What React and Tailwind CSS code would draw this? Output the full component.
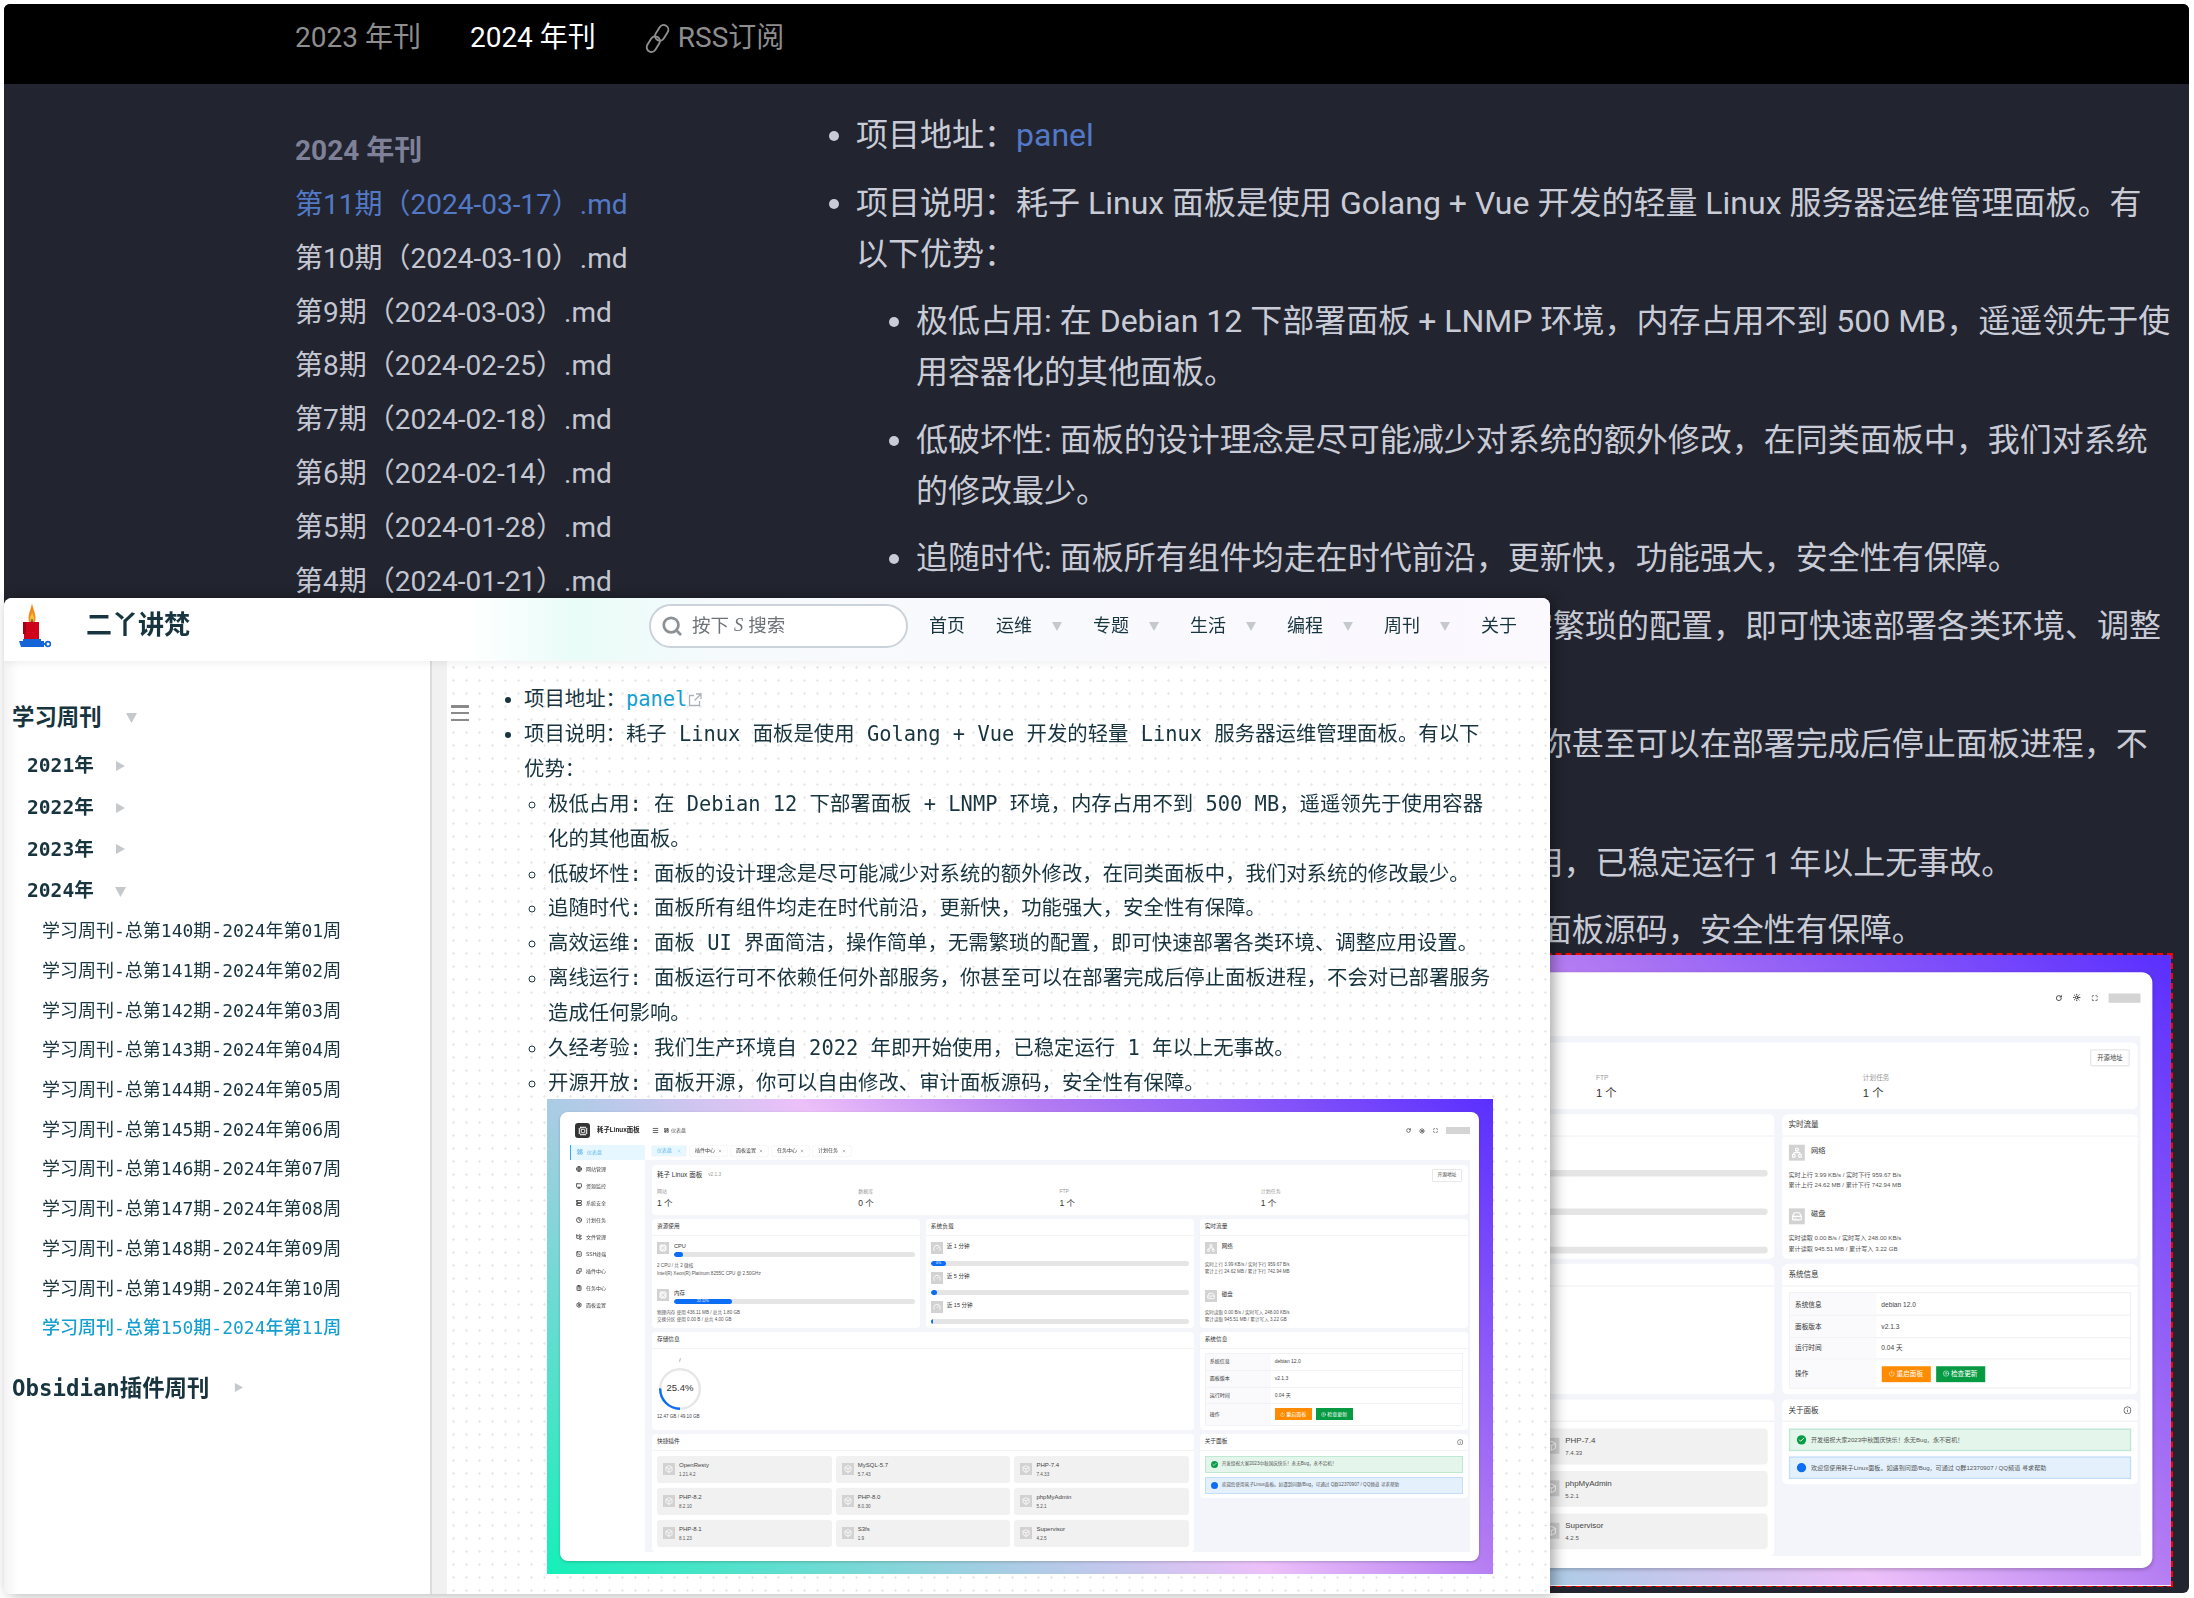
import React from "react";
import {
  Search, LayoutDashboard, Globe, Monitor, Server, Clock, FolderTree, SquareTerminal, Puzzle,
  ClipboardList, Settings, Menu, X, RotateCw, Sun, Maximize, Cpu, Gauge, Network, HardDrive, Box, Info, Power, CircleArrowUp, Check,
} from "lucide-react";

const SANS = "font-['Roboto','Noto_Sans_CJK_SC',sans-serif]";
const MONO = "font-['DejaVu_Sans_Mono','Noto_Sans_CJK_SC',monospace]";

function Tri({ dir = "down", className = "" }) {
  return (
    <svg viewBox="0 0 10 10" className={className}>
      {dir === "down" ? <polygon points="0,1 10,1 5,10" fill="#c6c9cc" /> : <polygon points="1,0 10,5 1,10" fill="#c6c9cc" />}
    </svg>
  );
}

function Logo() {
  return (
    <svg viewBox="0 0 34 46" className="w-[34px] h-[46px] shrink-0">
      <path d="M15 0 C16 6 18.5 10 18.5 15 C18.5 20 16 21 15 21 C13.5 21 11.5 19 11.5 15 C11.5 10 14 6 15 0Z" fill="#f28a1c" />
      <path d="M15 9 C16 12 17 13 17 16 C17 19 13 19 13 16 C13 13 15 12 15 9Z" fill="#f9c23c" />
      <rect x="7" y="19" width="15" height="20" fill="#d0021b" />
      <rect x="6" y="19" width="3" height="12" fill="#a80014" />
      <rect x="14.5" y="16" width="1" height="4" fill="#333" />
      <polygon points="2,38 27,38 27,44 4,44" fill="#1565d8" />
      <rect x="6" y="36" width="18" height="3" fill="#1565d8" />
      <circle cx="31" cy="41" r="2.4" fill="none" stroke="#1565d8" strokeWidth="1.6" />
      <rect x="26" y="40" width="3.5" height="2" fill="#1565d8" />
    </svg>
  );
}

function ChainIcon() {
  return (
    <svg viewBox="0 0 28 28" className="w-[31px] h-[31px] shrink-0" fill="none" stroke="#8e8e8e" strokeWidth="1.7">
      <rect x="13.5" y="1.5" width="8.5" height="15" rx="4.2" transform="rotate(32 18 9)" />
      <rect x="6" y="11.5" width="8.5" height="15" rx="4.2" transform="rotate(32 10 19)" />
    </svg>
  );
}

function Card({ title, right, className = "", children }) {
  return (
    <div className={`bg-white rounded-[4px] ${className}`}>
      <div className="h-[17px] border-b border-[#f4f4f6] px-[5px] flex items-center justify-between text-[5.7px] text-[#333]">
        <span>{title}</span>
        {right}
      </div>
      {children}
    </div>
  );
}

function IconBox({ Icon, className = "" }) {
  return (
    <div className={`w-[12px] h-[12px] bg-[#d2d2d2] flex items-center justify-center shrink-0 ${className}`}>
      <Icon size={8} color="#fff" strokeWidth={2.5} />
    </div>
  );
}

function Bar({ pct, label }) {
  return (
    <div className="h-[5px] rounded-full bg-[#e5e5e5] overflow-hidden">
      <div className="h-full rounded-full bg-[#0d6ef5] text-white text-[3.5px] leading-[5px] text-center whitespace-nowrap" style={{ width: pct }}>
        {label}
      </div>
    </div>
  );
}

const menu = [
  [LayoutDashboard, "仪表盘"], [Globe, "网站管理"], [Monitor, "资源监控"], [Server, "系统安全"], [Clock, "计划任务"],
  [FolderTree, "文件管理"], [SquareTerminal, "SSH终端"], [Puzzle, "插件中心"], [ClipboardList, "任务中心"], [Settings, "面板设置"],
];
const tabs = [["仪表盘", 34], ["插件中心", 37], ["面板设置", 37], ["任务中心", 37], ["计划任务", 38]];
const stats = [["网站", "1 个"], ["数据库", "0 个"], ["FTP", "1 个"], ["计划任务", "1 个"]];
const plugins = [
  ["OpenResty", "1.21.4.2"], ["MySQL-5.7", "5.7.43"], ["PHP-7.4", "7.4.33"],
  ["PHP-8.2", "8.2.10"], ["PHP-8.0", "8.0.30"], ["phpMyAdmin", "5.2.1"],
  ["PHP-8.1", "8.1.23"], ["S3fs", "1.9"], ["Supervisor", "4.2.5"],
];

function PanelShot() {
  return (
    <div className="w-[946px] h-[475px] pl-[13px] pr-[14px] py-[13px] bg-[linear-gradient(45deg,#14f0b8_0%,#a9cce4_33%,#ecc0f9_51%,#b57df2_67%,#5a2fff_100%)] font-['Liberation_Sans','Noto_Sans_CJK_SC',sans-serif]">
      <div className="w-full h-full rounded-[8px] bg-white flex pr-[9px] pb-[9px] shadow-[0_1px_3px_rgba(0,0,0,0.2)]">
        <div className="w-full h-full flex blur-[0.35px]">
        {/* side menu */}
        <div className="w-[85px] shrink-0 flex flex-col">
          <div className="h-[32px] flex items-center pl-[15px] gap-[7px] pt-[6px]">
            <div className="w-[15px] h-[15px] rounded-[3px] bg-[#333] flex items-center justify-center">
              <Cpu size={10} color="#fff" />
            </div>
            <span className="text-[6.4px] font-bold text-[#222] whitespace-nowrap">耗子Linux面板</span>
          </div>
          {menu.map(([Icon, t], i) => (
            <div key={t} className="h-[17px] flex items-center">
              <div className={`ml-[10px] w-[75px] h-[15px] flex items-center pl-[6px] gap-[4px] text-[5px] whitespace-nowrap ${i === 0 ? "bg-[#e6f7ff] border-l border-[#2aa7ff] text-[#67b7ee]" : "text-[#444]"}`}>
                <Icon size={6} strokeWidth={3} color={i === 0 ? "#67b7ee" : "#333"} />
                <span>{t}</span>
              </div>
            </div>
          ))}
        </div>
        {/* right */}
        <div className="flex-1 min-w-0 flex flex-col">
          <div className="h-[48px] shrink-0 pt-[12px] pl-[7px]">
            <div className="h-[14px] flex items-center">
              <Menu size={7} color="#333" strokeWidth={2.5} />
              <LayoutDashboard size={5} className="ml-[5px]" color="#333" strokeWidth={3} />
              <span className="ml-[2px] text-[5px] text-[#555]">仪表盘</span>
              <div className="ml-auto flex items-center">
                <RotateCw size={5} color="#333" strokeWidth={3} />
                <Sun size={6} className="ml-[8px]" color="#333" strokeWidth={3} />
                <Maximize size={5} className="ml-[8px]" color="#333" strokeWidth={2.5} />
                <div className="ml-[8px] w-[24px] h-[7px] bg-[#d4d4d4]" />
              </div>
            </div>
            <div className="mt-[8px] flex gap-[4px]">
              {tabs.map(([t, w], i) => (
                <div key={t} style={{ width: w }} className={`h-[10px] rounded-[1px] flex items-center justify-between px-[5px] text-[5px] whitespace-nowrap shadow-[0_0_1px_rgba(0,0,0,0.3)] ${i === 0 ? "bg-[#e6f7ff] text-[#67b7ee]" : "bg-white text-[#444]"}`}>
                  <span>{t}</span>
                  <X size={4} strokeWidth={2} />
                </div>
              ))}
            </div>
          </div>
          <div className="flex-1 min-h-0 bg-[#f3f5fb] pl-[7px] pr-[2px] pt-[5px] grid grid-cols-3 gap-x-[5.5px] gap-y-[4px] grid-rows-[50px_109px_98px_1fr]">
            {/* overview */}
            <div className="col-span-3 bg-white rounded-[4px] pl-[5px] pt-[6px] flex flex-col">
              <div className="h-[10px] flex items-center text-[6.5px] text-[#333]">
                <span>耗子 Linux 面板</span>
                <span className="ml-[6px] text-[4.8px] text-[#999]">v2.1.3</span>
                <div className="ml-auto mr-[6px] w-[30px] h-[13px] border border-[#e8e8e8] rounded-[1px] flex items-center justify-center text-[4.8px] text-[#444]">开源地址</div>
              </div>
              <div className="grid grid-cols-4 mt-[6px] pr-[6px]">
                {stats.map(([k, v]) => (
                  <div key={k}>
                    <div className="text-[5px] leading-[8px] text-[#999]">{k}</div>
                    <div className="mt-[2px] text-[8.5px] leading-[12px] text-[#333]">{v}</div>
                  </div>
                ))}
              </div>
            </div>
            {/* resources */}
            <Card title="资源使用">
              <div className="px-[5px] pt-[6px] text-[4.6px] leading-[7.5px] text-[#555]">
                <div className="flex">
                  <IconBox Icon={Cpu} />
                  <div className="flex-1 ml-[5px]">
                    <div className="h-[8px] text-[5.5px] leading-[8px] text-[#333]">CPU</div>
                    <div className="mt-[2px]"><Bar pct="3.6%" label="" /></div>
                  </div>
                </div>
                <div className="mt-[5px] leading-[8px]">2 CPU / 共 2 微核</div>
                <div className="leading-[8px] whitespace-nowrap">Intel(R) Xeon(R) Platinum 8255C CPU @ 2.50GHz</div>
                <div className="flex mt-[11px]">
                  <IconBox Icon={Cpu} />
                  <div className="flex-1 ml-[5px]">
                    <div className="h-[8px] text-[5.5px] leading-[8px] text-[#333]">内存</div>
                    <div className="mt-[2px]"><Bar pct="24%" label="22.12%" /></div>
                  </div>
                </div>
                <div className="mt-[5px]">物理内存 使用 436.11 MB / 总共 1.80 GB</div>
                <div>交换分区 使用 0.00 B / 总共 4.00 GB</div>
              </div>
            </Card>
            <Card title="系统负载">
              <div className="px-[5px] pt-[6px] text-[5.5px] text-[#333]">
                <div className="flex items-start"><IconBox Icon={Gauge} /><span className="ml-[4px] leading-[8px]">近 1 分钟</span></div>
                <div className="mt-[7px]"><Bar pct="6%" label="0%" /></div>
                <div className="mt-[6px] flex items-start"><IconBox Icon={Gauge} /><span className="ml-[4px] leading-[8px]">近 5 分钟</span></div>
                <div className="mt-[6px]"><Bar pct="2.3%" label="" /></div>
                <div className="mt-[6px] flex items-start"><IconBox Icon={Gauge} /><span className="ml-[4px] leading-[8px]">近 15 分钟</span></div>
                <div className="mt-[6px]"><Bar pct="0.8%" label="" /></div>
              </div>
            </Card>
            <Card title="实时流量">
              <div className="px-[5px] pt-[6px] text-[4.6px] leading-[7.5px] text-[#555] whitespace-nowrap">
                <div className="flex items-start"><IconBox Icon={Network} /><span className="ml-[5px] text-[5.5px] leading-[8px] text-[#333]">网络</span></div>
                <div className="mt-[7px]">实时上行 3.99 KB/s / 实时下行 959.67 B/s</div>
                <div>累计上行 24.62 MB / 累计下行 742.94 MB</div>
                <div className="mt-[14px] flex items-start"><IconBox Icon={HardDrive} /><span className="ml-[5px] text-[5.5px] leading-[8px] text-[#333]">磁盘</span></div>
                <div className="mt-[7px]">实时读取 0.00 B/s / 实时写入 248.00 KB/s</div>
                <div>累计读取 945.51 MB / 累计写入 3.22 GB</div>
              </div>
            </Card>
            {/* storage */}
            <Card title="存储信息" className="col-span-2">
              <div className="px-[5px] pt-[8px] text-[#444]">
                <div className="w-[46px] text-center text-[4.6px] leading-[8px]">/</div>
                <div className="relative w-[42px] h-[42px] ml-[2px] mt-[3px]">
                  <svg viewBox="0 0 42 42" className="w-[42px] h-[42px]">
                    <circle cx="21" cy="21" r="19.8" fill="none" stroke="#e6e6e6" strokeWidth="2.4" />
                    <circle cx="21" cy="21" r="19.8" fill="none" stroke="#0d6ef5" strokeWidth="2.4" strokeDasharray="31.6 124.4" transform="rotate(90 21 21)" />
                  </svg>
                  <div className="absolute inset-0 flex items-center justify-center text-[9.5px] text-[#333]">25.4%</div>
                </div>
                <div className="mt-[3px] text-[4.6px] leading-[8px] whitespace-nowrap">12.47 GB / 49.10 GB</div>
              </div>
            </Card>
            <Card title="系统信息">
              <div className="mx-[5px] mt-[4px] border border-[#f2f2f4] rounded-[1px] text-[5px] text-[#444]">
                {[["系统信息", "debian 12.0", "h-[17px]"], ["面板版本", "v2.1.3", "h-[17px]"], ["运行时间", "0.04 天", "h-[16px]"]].map(([k, v, h]) => (
                  <div key={k} className={`flex border-b border-[#f2f2f4] ${h}`}>
                    <div className="w-[65px] bg-[#fafafc] pl-[4px] flex items-center text-[#333]">{k}</div>
                    <div className="pl-[4px] flex items-center">{v}</div>
                  </div>
                ))}
                <div className="flex h-[21px]">
                  <div className="w-[65px] bg-[#fafafc] pl-[4px] flex items-center text-[#333]">操作</div>
                  <div className="pl-[4px] flex items-center gap-[4px] text-white">
                    <div className="w-[37px] h-[12px] bg-[#ff8c00] flex items-center justify-center gap-[1px]"><Power size={5} />重启面板</div>
                    <div className="w-[37px] h-[12px] bg-[#069a42] flex items-center justify-center gap-[1px]"><CircleArrowUp size={5} />检查更新</div>
                  </div>
                </div>
              </div>
            </Card>
            {/* plugins */}
            <Card title="快捷插件" className="col-span-2">
              <div className="px-[5px] pt-[5px] grid grid-cols-3 gap-x-[4px] gap-y-[5px]">
                {plugins.map(([n, v]) => (
                  <div key={n} className="h-[27px] rounded-[3px] bg-[#f1f1f1] flex pl-[6px] pt-[5px]">
                    <IconBox Icon={Box} className="mt-[2px]" />
                    <div className="ml-[4px]">
                      <div className="text-[6px] leading-[8px] text-[#444]">{n}</div>
                      <div className="mt-[2px] text-[4.6px] leading-[8px] text-[#555]">{v}</div>
                    </div>
                  </div>
                ))}
              </div>
            </Card>
            <Card title="关于面板" className="self-start" right={<Info size={6.5} color="#444" />}>
              <div className="px-[5px] pt-[5px] pb-[4px] flex flex-col gap-[4px] text-[4.6px] text-[#555] whitespace-nowrap">
                <div className="h-[17px] bg-[#e4f5ec] border border-[#bfe9d3] flex items-center pl-[5px] gap-[4px]">
                  <span className="w-[7px] h-[7px] rounded-full bg-[#0a9b46] flex items-center justify-center"><Check size={5} color="#fff" strokeWidth={3} /></span>
                  开发组祝大家2023中秋国庆快乐！永无Bug，永不宕机！
                </div>
                <div className="h-[17px] bg-[#e4f1fd] border border-[#c5def8] flex items-center pl-[5px] gap-[4px]">
                  <span className="w-[7px] h-[7px] rounded-full bg-[#0d6ef5]" />
                  欢迎您使用耗子Linux面板。如遇到问题/Bug，可通过 Q群12370907 / QQ频道 寻求帮助
                </div>
              </div>
            </Card>
          </div>
        </div>
        </div>
      </div>
    </div>
  );
}

const darkIssues = [
  ["第11期（2024-03-17）.md", true], ["第10期（2024-03-10）.md"], ["第9期（2024-03-03）.md"], ["第8期（2024-02-25）.md"],
  ["第7期（2024-02-18）.md"], ["第6期（2024-02-14）.md"], ["第5期（2024-01-28）.md"], ["第4期（2024-01-21）.md"],
];

function DarkWindow() {
  return (
    <div className={`absolute left-[4px] top-[4px] w-[2185px] h-[1589px] rounded-[6px] bg-[#22242f] overflow-hidden flex flex-col ${SANS}`}>
      <div className="h-[80px] shrink-0 bg-black pl-[291px] pb-[12px] flex items-center gap-[49px] text-[28px] text-[#8e8e8e]">
        <span>2023 年刊</span>
        <span className="text-white">2024 年刊</span>
        <span className="flex items-center gap-[5px] -ml-[3px]"><ChainIcon />RSS订阅</span>
      </div>
      <div className="flex-1 min-h-0 flex pl-[291px]">
        <div className="w-[561px] shrink-0 pt-[47px]">
          <div className="text-[28px] leading-[40px] font-bold text-[#7f8198]">2024 年刊</div>
          <div className="mt-[7px] flex flex-col text-[28px] leading-[53.8px] text-[#c4c7d1]">
            {darkIssues.map(([t, a]) => (
              <div key={t} className={a ? "text-[#5379c6]" : ""}>{t}</div>
            ))}
          </div>
        </div>
        <div className="w-[1315px] pt-[26px] text-[32px] leading-[51px] text-[#c9ccd6]">
          <ul className="list-disc flex flex-col gap-[16.5px]">
            <li>项目地址：<span className="text-[#5379c6]">panel</span></li>
            <li>
              项目说明：耗子 Linux 面板是使用 Golang + Vue 开发的轻量 Linux 服务器运维管理面板。有以下优势：
              <ul className="list-disc pl-[60px] mt-[16.5px] flex flex-col gap-[16.5px]">
                <li>极低占用: 在 Debian 12 下部署面板 + LNMP 环境，内存占用不到 500 MB，遥遥领先于使用容器化的其他面板。</li>
                <li>低破坏性: 面板的设计理念是尽可能减少对系统的额外修改，在同类面板中，我们对系统的修改最少。</li>
                <li>追随时代: 面板所有组件均走在时代前沿，更新快，功能强大，安全性有保障。</li>
                <li>高效运维: 面板 UI 界面简洁，操作简单，无需繁琐的配置，即可快速部署各类环境、调整应用设置。</li>
                <li>离线运行: 面板运行可不依赖任何外部服务，你甚至可以在部署完成后停止面板进程，不会对已部署服务造成任何影响。</li>
                <li>久经考验: 我们生产环境自 2022 年即开始使用，已稳定运行 1 年以上无事故。</li>
                <li>
                  开源开放: 面板开源，你可以自由修改、审计面板源码，安全性有保障。
                  <div className="-mt-[1px] w-[1255px] h-[630px] outline-2 outline-dashed outline-[#ff0000]">
                    <div className="scale-[1.3266] origin-top-left w-[946px] h-[475px]">
                      <PanelShot />
                    </div>
                  </div>
                </li>
              </ul>
            </li>
          </ul>
        </div>
      </div>
    </div>
  );
}

const weekly = [
  "学习周刊-总第140期-2024年第01周", "学习周刊-总第141期-2024年第02周", "学习周刊-总第142期-2024年第03周", "学习周刊-总第143期-2024年第04周",
  "学习周刊-总第144期-2024年第05周", "学习周刊-总第145期-2024年第06周", "学习周刊-总第146期-2024年第07周", "学习周刊-总第147期-2024年第08周",
  "学习周刊-总第148期-2024年第09周", "学习周刊-总第149期-2024年第10周", "学习周刊-总第150期-2024年第11周",
];

function LightWindow() {
  return (
    <div className={`absolute left-[4px] top-[598px] w-[1546px] h-[996px] rounded-t-[8px] rounded-bl-[6px] bg-white overflow-hidden flex flex-col shadow-[4px_0_14px_rgba(0,0,0,0.35)] text-[#17343f] ${MONO}`}>
      <div className="h-[63px] shrink-0 pb-[8px] flex items-center bg-[linear-gradient(90deg,#ffffff_30%,#e9fcf8_37%,#f7fafd_47%,#fbf8fe_100%)] shadow-[0_2px_8px_rgba(0,0,0,0.07)] relative z-10">
        <div className="ml-[13px]"><Logo /></div>
        <span className="ml-[35px] text-[26px] font-bold">二丫讲梵</span>
        <div className="ml-[459px] w-[259px] h-[44px] rounded-full border-2 border-[#cbd2d9] bg-white flex items-center pl-[10px] gap-[9px] text-[18.5px] text-[#6d7378]">
          <Search size={22} strokeWidth={3} color="#8c9196" />
          <span className="flex items-center">按下<span className="font-['Liberation_Serif'] italic mx-[5px]">S</span>搜索</span>
        </div>
        <div className="ml-[21px] flex items-center gap-[31px] text-[18px]">
          <span>首页</span>
          {["运维", "专题", "生活", "编程", "周刊"].map((t) => (
            <span key={t} className="flex items-center gap-[20px]">{t}<Tri className="w-[10px] h-[10px]" /></span>
          ))}
          <span>关于</span>
        </div>
      </div>
      <div className="flex-1 min-h-0 flex">
        <div className="w-[426px] shrink-0 pt-[40px] pl-[8px] bg-[linear-gradient(90deg,#f3f3f3,#ffffff_14px)]">
          <div className="flex items-center text-[22.4px] leading-[32px] font-bold">学习周刊<Tri className="ml-[24px] w-[11px] h-[11px]" /></div>
          <div className="mt-[12px] pl-[15px] flex flex-col text-[19.6px] leading-[41.8px] font-bold">
            {["2021年", "2022年", "2023年"].map((t) => (
              <div key={t} className="flex items-center">{t}<Tri dir="right" className="ml-[21px] w-[10px] h-[12px]" /></div>
            ))}
            <div className="flex items-center">2024年<Tri className="ml-[21px] w-[11px] h-[11px]" /></div>
          </div>
          <div className="-mt-[1px] pl-[30px] flex flex-col text-[18px] leading-[39.7px]">
            {weekly.map((t, i) => (
              <div key={t} className={i === 10 ? "text-[#159fd0] font-medium" : ""}>{t}</div>
            ))}
          </div>
          <div className="mt-[24px] flex items-center text-[22.4px] leading-[32px] font-bold">Obsidian插件周刊<Tri dir="right" className="ml-[25px] w-[9px] h-[11px]" /></div>
        </div>
        <div className="w-[17px] shrink-0 bg-[#f1f1f1] border-l-2 border-[#dcdcdc]" />
        <div className="flex-1 min-w-0 flex bg-white bg-[radial-gradient(#e9e9e9_1px,transparent_1.2px)] bg-[length:13px_13px] text-[20.4px] leading-[34.9px]">
          <div className="ml-[4px] mt-[44px] w-[18px] h-[16px] shrink-0 flex flex-col justify-between">
            <div className="h-[2.5px] bg-[#8a8a8a]" />
            <div className="h-[2.5px] bg-[#8a8a8a]" />
            <div className="h-[2.5px] bg-[#8a8a8a]" />
          </div>
          <ul className="list-disc ml-[55px] mt-[21px] w-[970px] shrink-0">
            <li>
              项目地址：<span className="text-[#11a0d0]">panel</span>
              <svg viewBox="0 0 14 14" className="inline w-[14px] h-[14px] ml-[1px] align-[-1px]" fill="none" stroke="#aab2b8" strokeWidth="1.3">
                <path d="M6 2.5H1.5v10h10V8" /><path d="M8 1h5v5M13 1 6.5 7.5" />
              </svg>
            </li>
            <li>
              项目说明：耗子 Linux 面板是使用 Golang + Vue 开发的轻量 Linux 服务器运维管理面板。有以下优势：
              <ul className="list-[circle] pl-[24px]">
                <li>极低占用: 在 Debian 12 下部署面板 + LNMP 环境，内存占用不到 500 MB，遥遥领先于使用容器化的其他面板。</li>
                <li>低破坏性: 面板的设计理念是尽可能减少对系统的额外修改，在同类面板中，我们对系统的修改最少。</li>
                <li>追随时代: 面板所有组件均走在时代前沿，更新快，功能强大，安全性有保障。</li>
                <li>高效运维: 面板 UI 界面简洁，操作简单，无需繁琐的配置，即可快速部署各类环境、调整应用设置。</li>
                <li>离线运行: 面板运行可不依赖任何外部服务，你甚至可以在部署完成后停止面板进程，不会对已部署服务造成任何影响。</li>
                <li>久经考验: 我们生产环境自 2022 年即开始使用，已稳定运行 1 年以上无事故。</li>
                <li>开源开放: 面板开源，你可以自由修改、审计面板源码，安全性有保障。<div className="-mt-[2px] -ml-[1px]"><PanelShot /></div></li>
              </ul>
            </li>
          </ul>
        </div>
      </div>
    </div>
  );
}

export default function App() {
  return (
    <div className="relative w-[2194px] h-[1598px] bg-white overflow-hidden">
      <DarkWindow />
      <LightWindow />
    </div>
  );
}
